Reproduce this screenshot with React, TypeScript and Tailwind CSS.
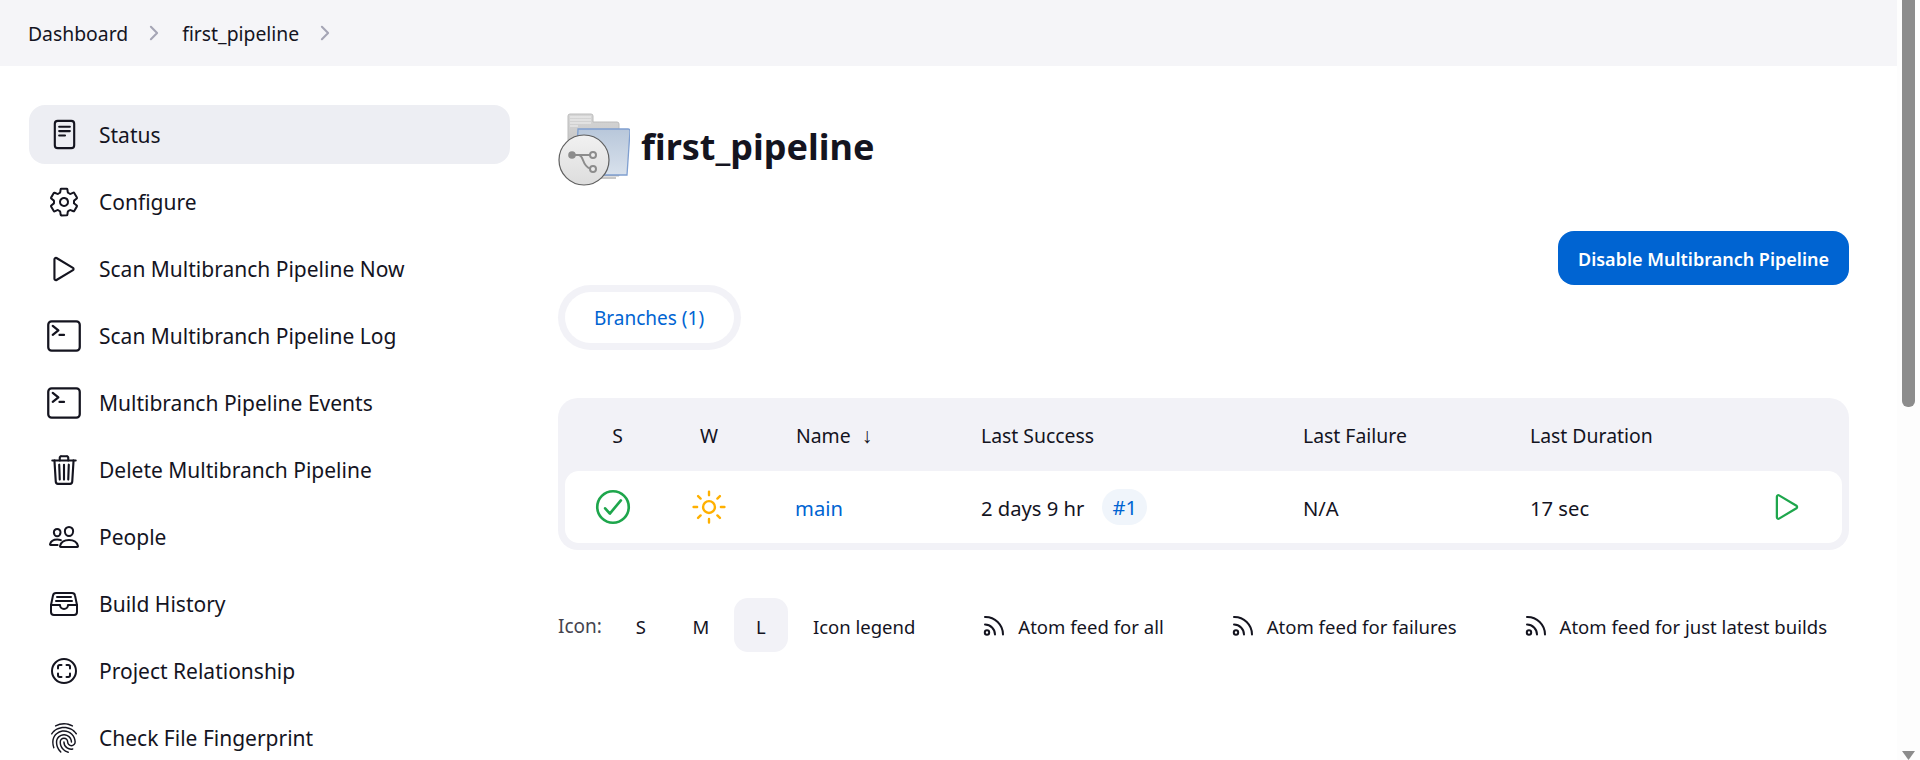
import React from 'react';
import {
  IoSettingsOutline,
  IoPlayOutline,
  IoTerminalOutline,
  IoTrashOutline,
  IoPeopleOutline,
  IoFileTrayFullOutline,
  IoScanCircleOutline,
  IoFingerPrintOutline,
  IoChevronForward,
  IoCheckmarkCircleOutline,
  IoSunnyOutline,
} from 'react-icons/io5';

const FONT = "font-['Noto_Sans','Liberation_Sans',sans-serif]";
const COLUMNS = 'grid grid-cols-[95px_98px_223px_322px_227px_245px_1fr] items-center';

const StatusIcon = () => (
  <svg viewBox="0 0 24 32" className="w-[25px] h-[31px]" fill="none" stroke="currentColor" strokeWidth="2.2" strokeLinecap="round">
    <rect x="2" y="2" width="20" height="28" rx="3" />
    <path d="M6.5 8h11M6.5 12.5h11M6.5 17h6" />
  </svg>
);

const RssIcon = () => (
  <svg viewBox="0 0 24 24" className="w-[24px] h-[24px] shrink-0" fill="none" stroke="currentColor" strokeWidth="2" strokeLinecap="round">
    <circle cx="5" cy="19.5" r="2.2" />
    <path d="M3 11.5a10 10 0 0 1 10 10" />
    <path d="M3 4a17.5 17.5 0 0 1 18 17.5" />
  </svg>
);

const FolderIcon = () => (
  <svg viewBox="0 0 72 76" className="w-[72px] h-[76px] shrink-0">
    <defs>
      <linearGradient id="folderBack" x1="0" y1="0" x2="0" y2="1">
        <stop offset="0" stopColor="#d6d6d6" />
        <stop offset="1" stopColor="#b5b5b5" />
      </linearGradient>
      <linearGradient id="folderFront" x1="0" y1="0" x2="0" y2="1">
        <stop offset="0" stopColor="#b8c7da" />
        <stop offset="1" stopColor="#d8e1ec" />
      </linearGradient>
      <linearGradient id="badge" x1="0" y1="0" x2="0" y2="1">
        <stop offset="0" stopColor="#f1f1f1" />
        <stop offset="1" stopColor="#dddddd" />
      </linearGradient>
    </defs>
    <path d="M12 4h21a2 2 0 0 1 2 2v6h24a2 2 0 0 1 2 2v52H10V6a2 2 0 0 1 2-2z" fill="url(#folderBack)" stroke="#bcbcbc" />
    <path d="M12 7h21M12 10h21M12 13h21M12 16h8" stroke="#f2f2f2" strokeWidth="1" />
    <path d="M30 65h30M30 68h28" stroke="#b5b5b5" strokeWidth="1.5" />
    <path d="M20 19h50a2 2 0 0 1 2 2l-3 44H18z" fill="url(#folderFront)" stroke="#7f9fd0" strokeWidth="1.3" />
    <circle cx="26" cy="50" r="25" fill="url(#badge)" stroke="#5f5f5f" strokeWidth="1.2" />
    <g fill="none" stroke="#8c8c8c" strokeWidth="2">
      <path d="M14 45h18" />
      <path d="M21 45c5 1 3 11 11 13.500" />
      <circle cx="35" cy="45" r="3" fill="#ececec" />
      <circle cx="35" cy="59" r="3" fill="#ececec" />
    </g>
    <circle cx="14" cy="45" r="3.8" fill="#8c8c8c" />
  </svg>
);

const NAV_ITEMS = [
  { label: 'Status', icon: <StatusIcon />, active: true },
  { label: 'Configure', icon: <IoSettingsOutline size={32} /> },
  { label: 'Scan Multibranch Pipeline Now', icon: <IoPlayOutline size={34} /> },
  { label: 'Scan Multibranch Pipeline Log', icon: <IoTerminalOutline size={36} /> },
  { label: 'Multibranch Pipeline Events', icon: <IoTerminalOutline size={36} /> },
  { label: 'Delete Multibranch Pipeline', icon: <IoTrashOutline size={34} /> },
  { label: 'People', icon: <IoPeopleOutline size={32} /> },
  { label: 'Build History', icon: <IoFileTrayFullOutline size={32} /> },
  { label: 'Project Relationship', icon: <IoScanCircleOutline size={32} /> },
  { label: 'Check File Fingerprint', icon: <IoFingerPrintOutline size={32} /> },
];

const Sidebar = () => (
  <nav className="w-[481px] shrink-0 flex flex-col gap-[8px]">
    {NAV_ITEMS.map((item) => (
      <a
        key={item.label}
        className={`h-[59px] shrink-0 flex items-center rounded-[16px] pl-[17px] text-[21px] font-[450] ${
          item.active ? 'bg-[#edeef3]' : ''
        }`}
      >
        <span className="w-[36px] flex justify-center mr-[17px]">{item.icon}</span>
        <span className="pt-[3px]">{item.label}</span>
      </a>
    ))}
  </nav>
);

const BranchTable = () => (
  <div className="mt-[48px] rounded-[20px] bg-[#f2f2f7] px-[7px] pb-[7px]">
    <div className={`${COLUMNS} h-[73px] pt-[2px] text-[19.400px] font-[450]`}>
      <span className="text-center pl-[10px]">S</span>
      <span className="text-center">W</span>
      <span className="pl-[38px] flex items-center">
        Name <span className="ml-[11px] text-[21px] leading-none">↓</span>
      </span>
      <span>Last Success</span>
      <span>Last Failure</span>
      <span>Last Duration</span>
      <span />
    </div>
    <div className={`${COLUMNS} h-[72px] rounded-[14px] bg-white text-[20.200px] font-[450]`}>
      <span className="flex justify-center">
        <IoCheckmarkCircleOutline size={42} className="text-[#1ea64c]" />
      </span>
      <span className="flex justify-center">
        <IoSunnyOutline size={38} className="text-[#ffb000]" />
      </span>
      <a className="pl-[37px] pt-[2px] text-[#0064d2]">main</a>
      <span className="flex items-center">
        <span className="pt-[2px]">2 days 9 hr</span>
        <a className="ml-[18px] w-[45px] h-[36px] rounded-full bg-[#f0f5fb] text-[#0064d2] flex items-center justify-center">#1</a>
      </span>
      <span className="pt-[2px]">N/A</span>
      <span className="pt-[2px]">17 sec</span>
      <span className="flex">
        <IoPlayOutline size={36} className="text-[#1ea64c] -ml-[6px]" />
      </span>
    </div>
  </div>
);

const FEEDS = ['Atom feed for all', 'Atom feed for failures', 'Atom feed for just latest builds'];

const Footer = () => (
  <div className="mt-[48px] flex items-center h-[54px] text-[18.500px] font-[450]">
    <span className="text-[19px] font-normal text-[#44444f] mr-[12px] pt-[3px]">Icon:</span>
    <div className="flex gap-[6px]">
      <span className="w-[54px] h-[54px] pt-[3px] flex items-center justify-center">S</span>
      <span className="w-[54px] h-[54px] pt-[3px] flex items-center justify-center">M</span>
      <span className="w-[54px] h-[54px] pt-[3px] rounded-[14px] bg-[#f2f2f7] flex items-center justify-center">L</span>
    </div>
    <span className="ml-[25px] pt-[3px]">Icon legend</span>
    {FEEDS.map((feed) => (
      <a key={feed} className="ml-[67px] flex items-center gap-[12px] text-[18.550px]">
        <RssIcon />
        <span className="pt-[3px]">{feed}</span>
      </a>
    ))}
  </div>
);

export default function App() {
  return (
    <div className={`${FONT} flex h-screen overflow-hidden bg-white text-[#14141f]`}>
      <div className="flex-1 min-w-0">
        <header className="h-[66px] bg-[#f5f5f8] flex items-center pl-[28px] text-[19.350px] font-[450]">
          <span className="pt-[2px]">Dashboard</span>
          <IoChevronForward size={22} className="ml-[15px] mr-[17px] text-[#a5a5b5]" />
          <span className="pt-[2px]">first_pipeline</span>
          <IoChevronForward size={22} className="ml-[15px] text-[#a5a5b5]" />
        </header>
        <div className="flex pl-[29px] pr-[48px] pt-[39px] gap-[48px]">
          <Sidebar />
          <main className="flex-1 min-w-0 pt-[5px]">
            <div className="flex items-center gap-[11px]">
              <FolderIcon />
              <h1 className="text-[36px] font-bold -mt-[2px]">first_pipeline</h1>
            </div>
            <div className="mt-[45px] flex justify-end">
              <button className="w-[291px] h-[54px] pt-[2px] rounded-[16px] bg-[#0064d2] text-white text-[18px] font-semibold">
                Disable Multibranch Pipeline
              </button>
            </div>
            <div className="inline-flex p-[7px] rounded-full bg-[#f2f2f7]">
              <a className="h-[51px] pl-[29px] pr-[30px] pt-[2px] rounded-full bg-white text-[#0064d2] text-[19px] font-[450] flex items-center">
                Branches (1)
              </a>
            </div>
            <BranchTable />
            <Footer />
          </main>
        </div>
      </div>
      <div className="w-[23px] shrink-0 bg-[#fdfdfd] flex flex-col items-center pl-[5px] pr-[5px]">
        <div className="w-[13px] h-[407px] rounded-b-[6px] bg-[#8c8c8c]" />
        <svg viewBox="0 0 13 9" className="w-[13px] h-[9px] mt-auto">
          <path d="M0 0h13L6.5 9z" fill="#8c8c8c" />
        </svg>
      </div>
    </div>
  );
}
